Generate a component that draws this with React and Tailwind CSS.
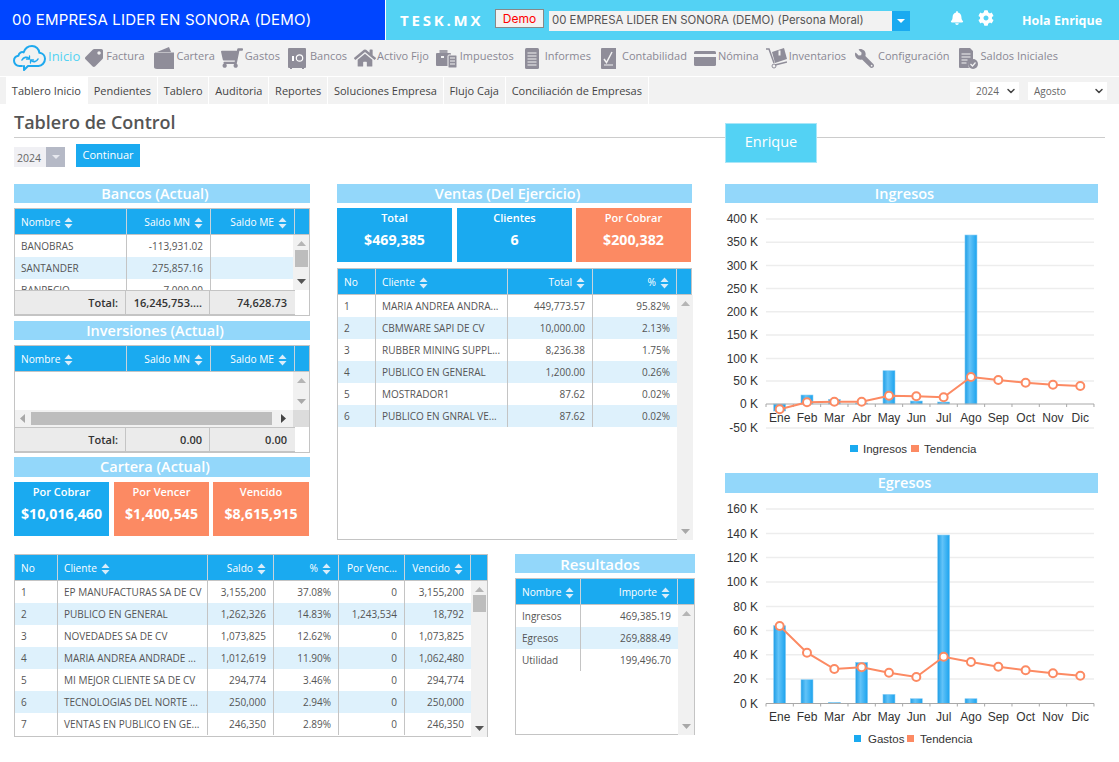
import React from 'react';
import { FaTag, FaShoppingCart, FaHome, FaWrench, FaBell, FaCog } from 'react-icons/fa';
import { ChevronDown } from 'lucide-react';

const GRAY = '#8f8d99';

const Sort = () => (
  <svg width="9" height="12" viewBox="0 0 9 12" className="ml-[4px] shrink-0" fill="#d9edfa">
    <path d="M4.500 0.500 8.500 5H.5z" /><path d="M4.500 11.500.5 7h8z" />
  </svg>
);

const CloudIcon = () => (
  <svg width="33" height="26" viewBox="0 0 33 26" fill="none" stroke="#1fa9ee" strokeWidth="2" strokeLinejoin="round" strokeLinecap="round">
    <path d="M9 21H6.500C3.500 21 1 18.600 1 15.800c0-2.600 2-4.600 4.400-5C6 7.600 8.600 6.600 10.600 7.400 12 3.400 15.400 1 19 1c4 0 7 3 7.400 6.800 3.200.2 5.600 2.800 5.600 6 0 3.800-3 7-6.500 7.200H15l-4 4v-4" />
    <path d="M9 15c1.500-3 5-3.500 7-1.500M25 14c-1.500 3-5 3.500-7 1.500" strokeWidth="1.600" />
    <path d="M16.500 11v3h-3M17.500 18v-3h3" strokeWidth="1.300" />
  </svg>
);
const Wallet = () => (
  <svg width="20" height="22" viewBox="0 0 20 22" fill={GRAY}>
    <path d="M3 5 15 0l2 5z" /><path d="M0 7c0-1 1-1.500 2-1.500h18V22H3c-2 0-3-1-3-2z" />
  </svg>
);
const Safe = () => (
  <svg width="18" height="21" viewBox="0 0 18 21">
    <path fill={GRAY} d="M0 1a1 1 0 0 1 1-1h16a1 1 0 0 1 1 1v18a1 1 0 0 1-1 1h-1v1h-2v-1H4v1H2v-1H1a1 1 0 0 1-1-1z" />
    <circle cx="11.500" cy="10" r="3.200" fill="none" stroke="#fff" strokeWidth="1.200" />
    <rect x="4" y="8" width="2" height="5" fill="#fff" />
  </svg>
);
const Briefcase = () => (
  <svg width="21" height="19" viewBox="0 0 21 19" fill={GRAY}>
    <path d="M3.500 1h8v3h-8z" opacity=".8" />
    <rect x="0" y="4" width="15" height="13" rx="1" />
    <rect x="12" y="6" width="9" height="13" rx="1" stroke="#f2f2f2" />
    <path d="M14 9h5M14 12h5M14 15h5" stroke="#f2f2f2" />
    <rect x="5" y="7" width="3" height="2" fill="#f2f2f2" />
  </svg>
);
const Doc = () => (
  <svg width="14" height="21" viewBox="0 0 14 21" fill={GRAY}>
    <rect width="14" height="21" rx="1.500" />
    <path d="M2.500 5h9M2.500 8h9M2.500 11h9M2.500 14h9M2.500 17h9" stroke="#f2f2f2" />
  </svg>
);
const Contab = () => (
  <svg width="15" height="21" viewBox="0 0 15 21" fill={GRAY}>
    <path d="M1 0h14v21H1a1 1 0 0 1-1-1V1a1 1 0 0 1 1-1z" />
    <path d="M3 11l2.500 3.500L11 4" stroke="#f2f2f2" strokeWidth="1.500" fill="none" />
    <path d="M3 17h9" stroke="#f2f2f2" />
  </svg>
);
const Card = () => (
  <svg width="22" height="15" viewBox="0 0 22 15" fill={GRAY}>
    <rect width="22" height="15" rx="1.500" />
    <rect y="3" width="22" height="3" fill="#f2f2f2" />
  </svg>
);
const Dolly = () => (
  <svg width="21" height="21" viewBox="0 0 21 21" fill={GRAY}>
    <path d="M0 1h3l5 14" stroke={GRAY} strokeWidth="1.500" fill="none" />
    <path d="M6 4 18 0l3 11-12 4z" />
    <path d="M9 17l12-3" stroke={GRAY} strokeWidth="1.500" />
    <circle cx="8" cy="18" r="2" fill="none" stroke={GRAY} />
    <rect x="12.500" y="2.500" width="2" height="5" fill="#f2f2f2" />
  </svg>
);
const FileCheck = () => (
  <svg width="19" height="21" viewBox="0 0 19 21" fill={GRAY}>
    <path d="M1 0h10l3 3v9a5 5 0 0 0-4 8H1a1 1 0 0 1-1-1V1a1 1 0 0 1 1-1z" />
    <path d="M2.500 6h9M2.500 9h9M2.500 12h6M2.500 15h5" stroke="#f2f2f2" />
    <circle cx="14" cy="16" r="5" />
    <path d="M11.500 16l2 2 3-3.500" stroke="#f2f2f2" strokeWidth="1.200" fill="none" />
  </svg>
);

const navItems = [
  { t: 'Factura', i: <FaTag size={18} color={GRAY} className="-scale-x-100" />, m: 'ml-[5px]', g: 'ml-[3px]' },
  { t: 'Cartera', i: <Wallet />, m: 'ml-[9px]', g: 'ml-[3px]' },
  { t: 'Gastos', i: <FaShoppingCart size={22} color={GRAY} className="-scale-x-100" />, m: 'ml-[6px]', g: 'ml-[2px]' },
  { t: 'Bancos', i: <Safe />, m: 'ml-[8px]', g: 'ml-[4px]' },
  { t: 'Activo Fijo', i: <FaHome size={22} color={GRAY} />, m: 'ml-[7px]', g: 'ml-[1px]' },
  { t: 'Impuestos', i: <Briefcase />, m: 'ml-[7px]', g: 'ml-[3px]' },
  { t: 'Informes', i: <Doc />, m: 'ml-[11px]', g: 'ml-[6px]' },
  { t: 'Contabilidad', i: <Contab />, m: 'ml-[10px]', g: 'ml-[6px]' },
  { t: 'Nómina', i: <Card />, m: 'ml-[7px]', g: 'ml-[2px]' },
  { t: 'Inventarios', i: <Dolly />, m: 'ml-[7px]', g: 'ml-[2px]' },
  { t: 'Configuración', i: <FaWrench size={19} color={GRAY} className="-scale-x-100" />, m: 'ml-[9px]', g: 'ml-[4px]' },
  { t: 'Saldos Iniciales', i: <FileCheck />, m: 'ml-[9px]', g: 'ml-[3px]' },
];

const tabs = ['Tablero Inicio', 'Pendientes', 'Tablero', 'Auditoria', 'Reportes', 'Soluciones Empresa', 'Flujo Caja', 'Conciliación de Empresas'];

const SecTitle = ({ children, cls = 'h-[19px] text-[14.500px] pr-[14px]' }) => (
  <div className={`bg-[#93d7fa] text-white font-semibold flex items-center justify-center leading-none pt-[1px] ${cls}`}>{children}</div>
);

const Stat = ({ title, value, coral, cls }) => (
  <div className={`h-[54px] flex flex-col items-center text-white pt-[2px] ${coral ? 'bg-[#fc8a63]' : 'bg-[#1aaaf0]'} ${cls}`}>
    <div className="text-[11px] font-semibold leading-[16px]">{title}</div>
    <div className="text-[14.200px] font-bold leading-[20px] mt-[4px]">{value}</div>
  </div>
);

const Tri = ({ up, color }) => (
  <svg width="9" height="5" viewBox="0 0 9 5" fill={color}>
    {up ? <path d="M4.500 0 9 5H0z" /> : <path d="M0 0h9L4.500 5z" />}
  </svg>
);

const VScroll = ({ thumb, downColor = '#a8a8a8', thumbCls = 'mt-[5px]' }) => (
  <div className="w-[16px] shrink-0 bg-[#f1f1f1] flex flex-col items-center py-[6px] h-full">
    <Tri up color="#b5b5b5" />
    {thumb && <div className={`w-[13px] h-[17px] bg-[#bdbdbd] ${thumbCls}`} />}
    <div className="mt-auto"><Tri color={downColor} /></div>
  </div>
);

const Head = ({ cols }) => (
  <div className="flex h-[25px] bg-[#1aaaf0] text-white text-[10.200px] border-b border-[#c4c4c4] box-content">
    {cols.map((c) => (
      <div key={c.h} className={`${c.w} shrink-0 flex items-center pl-[6px] pr-[7px] pt-[2px] border-r border-[#c8d4dc] ${c.right ? 'justify-end' : ''}`}>
        <span className="whitespace-nowrap">{c.h}</span>
        {c.sort && <Sort />}
      </div>
    ))}
    <div className="flex-1" />
  </div>
);

const Rows = ({ cols, rows, color = 'text-[#555555]' }) => (
  <div>
    {rows.map((r, i) => (
      <div key={i} className={`flex h-[22px] text-[10px] ${color} ${i % 2 ? 'bg-[#def1fc]' : 'bg-white'}`}>
        {r.map((v, j) => (
          <div key={j} className={`${cols[j].w} shrink-0 flex items-center pt-[1px] whitespace-nowrap overflow-hidden ${j < r.length - 1 ? 'border-r border-[#c4c4c4]' : ''} ${cols[j].right ? 'justify-end pr-[7px]' : 'pl-[6px]'}`}>{v}</div>
        ))}
      </div>
    ))}
  </div>
);

const Footer = ({ vals }) => (
  <div className="flex h-[25px] w-[280px] bg-[#ebebeb] border-y border-[#c4c4c4] text-[11px] font-semibold text-[#333333]">
    <div className="w-[111px] flex items-center justify-end pr-[7px] pt-[1px] border-r border-[#c4c4c4]">Total:</div>
    <div className="w-[84px] flex items-center justify-end pr-[7px] pt-[1px] border-r border-[#c4c4c4]">{vals[0]}</div>
    <div className="w-[84px] flex items-center justify-end pr-[7px] pt-[1px]">{vals[1]}</div>
  </div>
);

const bankCols = [
  { w: 'w-[112px]', h: 'Nombre', sort: true },
  { w: 'w-[84px]', h: 'Saldo MN', sort: true, right: true },
  { w: 'w-[84px]', h: 'Saldo ME', sort: true, right: true },
];
const ventaCols = [
  { w: 'w-[38px]', h: 'No' },
  { w: 'w-[132px]', h: 'Cliente', sort: true },
  { w: 'w-[85px]', h: 'Total', sort: true, right: true },
  { w: 'w-[84px]', h: '%', sort: true, right: true },
];
const carteraCols = [
  { w: 'w-[43px]', h: 'No' },
  { w: 'w-[150px]', h: 'Cliente', sort: true },
  { w: 'w-[66px]', h: 'Saldo', sort: true, right: true },
  { w: 'w-[65px]', h: '%', sort: true, right: true },
  { w: 'w-[66px]', h: 'Por Venc...', right: true },
  { w: 'w-[66px]', h: 'Vencido', sort: true, right: true },
];
const resCols = [
  { w: 'w-[65px]', h: 'Nombre', sort: true },
  { w: 'w-[97px]', h: 'Importe', sort: true, right: true },
];

const ventas = [
  ['1', 'MARIA ANDREA ANDRA...', '449,773.57', '95.82%'],
  ['2', 'CBMWARE SAPI DE CV', '10,000.00', '2.13%'],
  ['3', 'RUBBER MINING SUPPL...', '8,236.38', '1.75%'],
  ['4', 'PUBLICO EN GENERAL', '1,200.00', '0.26%'],
  ['5', 'MOSTRADOR1', '87.62', '0.02%'],
  ['6', 'PUBLICO EN GNRAL VE...', '87.62', '0.02%'],
];
const cartera = [
  ['1', 'EP MANUFACTURAS SA DE CV', '3,155,200', '37.08%', '0', '3,155,200'],
  ['2', 'PUBLICO EN GENERAL', '1,262,326', '14.83%', '1,243,534', '18,792'],
  ['3', 'NOVEDADES SA DE CV', '1,073,825', '12.62%', '0', '1,073,825'],
  ['4', 'MARIA ANDREA ANDRADE ...', '1,012,619', '11.90%', '0', '1,062,480'],
  ['5', 'MI MEJOR CLIENTE SA DE CV', '294,774', '3.46%', '0', '294,774'],
  ['6', 'TECNOLOGIAS DEL NORTE ...', '250,000', '2.94%', '0', '250,000'],
  ['7', 'VENTAS EN PUBLICO EN GE...', '246,350', '2.89%', '0', '246,350'],
];

const months = ['Ene', 'Feb', 'Mar', 'Abr', 'May', 'Jun', 'Jul', 'Ago', 'Sep', 'Oct', 'Nov', 'Dic'];
const cx = (i) => 766 + 27.33 * (i + 0.5);

const Chart = ({ id, top, h, ticks, zero, bars, trend, monthY, legend, legendY }) => (
  <svg width="373" height={h} viewBox={`725 ${top} 373 ${h}`} className="block" fontFamily='"Liberation Sans", sans-serif'>
    <defs>
      <linearGradient id={id} x1="0" x2="1" y1="0" y2="0">
        <stop offset="0" stopColor="#1f9ee6" />
        <stop offset="0.4" stopColor="#62c3f8" />
        <stop offset="1" stopColor="#1ba3ee" />
      </linearGradient>
    </defs>
    {ticks.map(([l, y]) => (
      <g key={l}>
        {y !== zero && <line x1="766" x2="1094" y1={y} y2={y} stroke="#ededed" strokeWidth="1.500" />}
        <text x="758" y={y + 4} textAnchor="end" fontSize="12" fill="#333333">{l}</text>
      </g>
    ))}
    {bars.map((y, i) => {
      const t = Math.min(y, zero);
      const hh = Math.abs(y - zero);
      return <rect key={i} x={cx(i) - 6} y={t} width="12" height={hh} fill={`url(#${id})`} stroke="#8fd0f5" strokeWidth="0.600" />;
    })}
    <line x1="766" x2="1094" y1={zero} y2={zero} stroke="#a8a8a8" />
    {Array.from({ length: 13 }, (_, i) => (
      <line key={i} x1={766 + 27.33 * i} x2={766 + 27.33 * i} y1={zero} y2={zero + 3} stroke="#a8a8a8" />
    ))}
    <polyline points={trend.map((y, i) => `${cx(i)},${y}`).join(' ')} fill="none" stroke="#fc8a63" strokeWidth="2" />
    {trend.map((y, i) => (
      <circle key={i} cx={cx(i)} cy={y} r="4" fill="#fff" stroke="#fc8a63" strokeWidth="2" />
    ))}
    {months.map((m, i) => (
      <text key={m} x={cx(i)} y={monthY} textAnchor="middle" fontSize="12" fill="#333333">{m}</text>
    ))}
    {legend.map(([x, w, label, color, tx]) => (
      <g key={label}>
        <rect x={x} y={legendY - 4} width={w} height="7" fill={color} />
        <text x={tx} y={legendY + 4} fontSize="11.500" fill="#333333">{label}</text>
      </g>
    ))}
  </svg>
);

const ingTicks = [['400 K', 219], ['350 K', 242.300], ['300 K', 265.500], ['250 K', 288.500], ['200 K', 311.800], ['150 K', 335], ['100 K', 358.500], ['50 K', 381], ['0 K', 404], ['-50 K', 428]];
const egrTicks = [['160 K', 509], ['140 K', 533.500], ['120 K', 557.500], ['100 K', 582], ['80 K', 606.500], ['60 K', 630.500], ['40 K', 654.800], ['20 K', 679], ['0 K', 703.500]];

export default function App() {
  return (
    <div className="relative w-[1119px] h-[762px] overflow-hidden bg-white font-['Open_Sans',sans-serif] text-[#555555]">
      {/* top bar */}
      <header className="flex h-[40px] bg-[#53d2f4] text-white">
        <div className="w-[386px] bg-[#0045ff] border-r border-white flex items-center pl-[12px] text-[15px] font-['Inter',sans-serif] tracking-[0.200px] whitespace-nowrap">00 EMPRESA LIDER EN SONORA (DEMO)</div>
        <div className="ml-[14px] flex items-center w-[81px] text-[15px] font-bold tracking-[2.800px] whitespace-nowrap">TESK.MX</div>
        <div className="ml-[14px] mt-[9px] w-[49px] h-[19px] bg-[#f2f2f2] border border-[#888888] text-[#ff0000] text-[12px] flex items-center justify-center font-['Inter',sans-serif]">Demo</div>
        <div className="ml-[5px] mt-[11px] w-[361px] h-[20px] bg-[#f2f2f2] flex items-center text-[#555555]">
          <span className="flex-1 pl-[3px] text-[11.400px] font-['Inter',sans-serif] whitespace-nowrap overflow-hidden">00 EMPRESA LIDER EN SONORA (DEMO) (Persona Moral)</span>
          <span className="w-[18px] h-full bg-[#1aaaf0] flex items-center justify-center">
            <svg width="8" height="4" viewBox="0 0 8 4" fill="#ffffff"><path d="M0 0h8L4 4z" /></svg>
          </span>
        </div>
        <FaBell size={14} className="ml-[40px] mt-[11px]" />
        <FaCog size={16} className="ml-[14px] mt-[10px]" />
        <div className="ml-[28px] mt-[12px] text-[12.500px] font-bold leading-[18px] whitespace-nowrap">Hola Enrique</div>
      </header>

      {/* nav */}
      <nav className="flex items-center h-[36px] bg-[#f2f2f2] pl-[13px] text-[11px] text-[#8a8894] border-b border-white box-content whitespace-nowrap">
        <CloudIcon />
        <span className="ml-[2px] mb-[2px] text-[13px] text-[#53d2f4]">Inicio</span>
        {navItems.map((n) => (
          <div key={n.t} className={`flex items-center ${n.m}`}>
            {n.i}
            <span className={`${n.g} mb-[4px]`}>{n.t}</span>
          </div>
        ))}
      </nav>

      {/* tabs */}
      <div className="flex h-[27px] bg-[#f2f2f2] pl-[6px] text-[11px] text-[#444444]">
        {tabs.map((t, i) => (
          <div key={t} className={`flex items-center px-[5.850px] pt-[2px] border-r border-white whitespace-nowrap ${i === 0 ? 'bg-white' : ''}`}>{t}</div>
        ))}
        <div className="ml-auto flex items-start pt-[5px] text-[10px] text-[#666666]">
          <div className="w-[49px] h-[18px] bg-white flex items-center justify-between pl-[6px] pr-[2px]">2024 <ChevronDown size={12} strokeWidth={3} color="#444444" /></div>
          <div className="ml-[9px] mr-[12px] w-[79px] h-[18px] bg-white flex items-center justify-between pl-[6px] pr-[2px]">Agosto <ChevronDown size={12} strokeWidth={3} color="#444444" /></div>
        </div>
      </div>

      {/* main */}
      <main className="px-[14px]">
        <div className="h-[33px] w-[1091px] border-b border-[#cccccc] box-content text-[18px] font-semibold leading-[37px] text-[#555555]">Tablero de Control</div>
        <div className="flex">
          <div className="w-[681px] shrink-0">
            <div className="flex items-end h-[29px]">
              <div className="w-[51px] h-[20px] bg-[#f0f0f4] flex items-center text-[10.500px] text-[#666666]">
                <span className="flex-1 pl-[3px] pt-[3px]">2024</span>
                <span className="w-[19px] h-full bg-[#b5b9c6] flex items-center justify-center">
                  <svg width="8" height="4" viewBox="0 0 8 4" fill="#e6e8ee"><path d="M0 0h8L4 4z" /></svg>
                </span>
              </div>
              <div className="ml-[11px] w-[64px] h-[23px] bg-[#1aaaf0] text-white text-[11px] flex items-center justify-center">Continuar</div>
            </div>
            <div className="flex mt-[17px]">
              {/* col 1 */}
              <div className="w-[296px] shrink-0">
                <SecTitle>Bancos (Actual)</SecTitle>
                <div className="mt-[5px] h-[108px] border border-[#c4c4c4] overflow-hidden">
                  <Head cols={bankCols} />
                  <div className="flex h-[55px] overflow-hidden">
                    <div className="flex-1 overflow-hidden">
                      <Rows cols={bankCols} rows={[['BANOBRAS', '-113,931.02', ''], ['SANTANDER', '275,857.16', ''], ['BANPECIO', '7,000.00', '']]} />
                    </div>
                    <VScroll thumb downColor="#555555" thumbCls="mt-[4px]" />
                  </div>
                  <Footer vals={['16,245,753....', '74,628.73']} />
                </div>
                <SecTitle cls="mt-[5px] h-[19px] text-[14.500px] pr-[14px]">Inversiones (Actual)</SecTitle>
                <div className="mt-[5px] h-[108px] border border-[#c4c4c4] overflow-hidden">
                  <Head cols={bankCols} />
                  <div className="flex h-[38px]">
                    <div className="flex-1 bg-white" />
                    <VScroll />
                  </div>
                  <div className="flex h-[17px]">
                    <div className="w-[278px] bg-[#f1f1f1] flex items-center pl-[5px]">
                      <svg width="5" height="9" viewBox="0 0 5 9" fill="#a8a8a8"><path d="M5 0v9L0 4.500z" /></svg>
                      <div className="ml-[6px] w-[241px] h-[13px] bg-[#bdbdbd]" />
                      <svg width="5" height="9" viewBox="0 0 5 9" fill="#444444" className="ml-[9px]"><path d="M0 0v9l5-4.500z" /></svg>
                    </div>
                    <div className="flex-1 bg-[#dcdcdc]" />
                  </div>
                  <Footer vals={['0.00', '0.00']} />
                </div>
                <SecTitle cls="mt-[4px] h-[20px] text-[14.500px] pr-[14px]">Cartera (Actual)</SecTitle>
                <div className="flex mt-[5px]">
                  <Stat title="Por Cobrar" value="$10,016,460" cls="w-[95px]" />
                  <Stat coral title="Por Vencer" value="$1,400,545" cls="w-[95px] ml-[5px]" />
                  <Stat coral title="Vencido" value="$8,615,915" cls="w-[96px] ml-[4px]" />
                </div>
              </div>
              {/* col 2 */}
              <div className="w-[355px] ml-[27px] shrink-0">
                <SecTitle>Ventas (Del Ejercicio)</SecTitle>
                <div className="flex mt-[5px]">
                  <Stat title="Total" value="$469,385" cls="w-[115px]" />
                  <Stat title="Clientes" value="6" cls="w-[115px] ml-[5px]" />
                  <Stat coral title="Por Cobrar" value="$200,382" cls="w-[115px] ml-[4px]" />
                </div>
                <div className="mt-[6px] w-[355px] h-[272px] border border-[#c4c4c4]">
                  <Head cols={ventaCols} />
                  <div className="flex h-[245px]">
                    <div className="flex-1"><Rows cols={ventaCols} rows={ventas} /></div>
                    <VScroll />
                  </div>
                </div>
              </div>
            </div>
            {/* bottom row */}
            <div className="flex mt-[14px]">
              <div className="w-[474px] h-[183px] border border-[#c4c4c4] shrink-0">
                <Head cols={carteraCols} />
                <div className="flex h-[156px]">
                  <div className="flex-1"><Rows cols={carteraCols} rows={cartera} /></div>
                  <VScroll thumb downColor="#555555" thumbCls="mt-[3px]" />
                </div>
              </div>
              <div className="w-[180px] ml-[27px] shrink-0">
                <SecTitle cls="h-[19px] text-[15px] pr-[10px]">Resultados</SecTitle>
                <div className="mt-[5px] h-[157px] border border-[#c4c4c4]">
                  <Head cols={resCols} />
                  <div className="flex h-[130px]">
                    <div className="flex-1"><Rows cols={resCols} rows={[['Ingresos', '469,385.19'], ['Egresos', '269,888.49'], ['Utilidad', '199,496.70']]} /></div>
                    <VScroll />
                  </div>
                </div>
              </div>
            </div>
          </div>
          {/* charts */}
          <div className="w-[373px] ml-[30px] pt-[46px] shrink-0">
            <SecTitle>Ingresos</SecTitle>
            <Chart id="gi" top={203} h={270} ticks={ingTicks} zero={404}
              bars={[411, 395, 399.300, 403, 370.700, 401, 402, 235, 404, 404, 404, 404]}
              trend={[409.300, 402.300, 401.700, 401.700, 395.700, 396.300, 397.300, 377, 380, 382.700, 384.700, 386]}
              monthY={422}
              legendY={449}
              legend={[[850, 8, 'Ingresos', '#1aaaf0', 863], [911, 8, 'Tendencia', '#fc8a63', 924]]} />
            <SecTitle cls="h-[20px] text-[14.500px] pr-[14px]">Egresos</SecTitle>
            <Chart id="ge" top={493} h={257} ticks={egrTicks} zero={703.500}
              bars={[625.700, 679.700, 702.300, 662.300, 694.300, 698.700, 535, 698.700, 703.500, 703.500, 703.500, 703.500]}
              trend={[626, 652.700, 669, 667.300, 672.700, 677, 656.700, 662, 666.700, 670.300, 673.300, 675.700]}
              monthY={721}
              legendY={739}
              legend={[[854, 7, 'Gastos', '#1aaaf0', 868], [907, 7, 'Tendencia', '#fc8a63', 920]]} />
          </div>
        </div>
      </main>

      {/* floating user chip */}
      <div className="absolute left-[725px] top-[123px] w-[92px] h-[40px] bg-[#53d2f4] border border-[#a9e6f8] text-white text-[14.500px] pb-[2px] flex items-center justify-center">Enrique</div>
    </div>
  );
}
